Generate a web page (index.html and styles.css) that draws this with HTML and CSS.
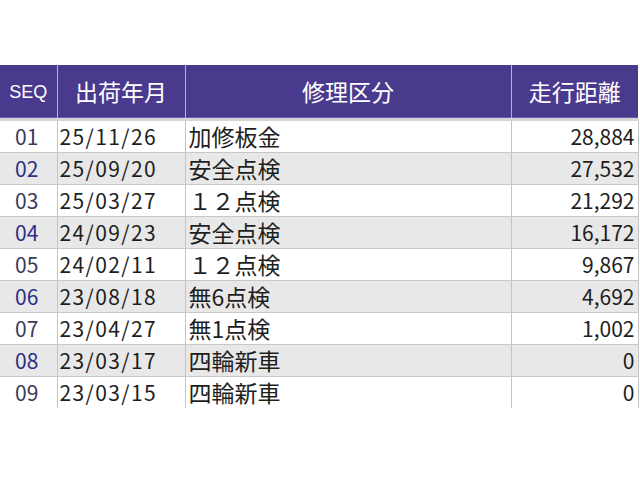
FILE: index.html
```html
<!DOCTYPE html>
<html lang="ja">
<head>
<meta charset="utf-8">
<link rel="stylesheet" href="styles.css">
</head>
<body>
<div class="page">
<table class="hist">
  <colgroup>
    <col class="c-seq"><col class="c-date"><col class="c-kind"><col class="c-km">
  </colgroup>
  <thead>
    <tr><th class="seq-h">SEQ</th><th>出荷年月</th><th>修理区分</th><th>走行距離</th></tr>
  </thead>
  <tbody>
    <tr><td class="seq">01</td><td class="date">25/11/26</td><td class="kind">加修板金</td><td class="km">28,884</td></tr>
    <tr class="alt"><td class="seq">02</td><td class="date">25/09/20</td><td class="kind">安全点検</td><td class="km">27,532</td></tr>
    <tr><td class="seq">03</td><td class="date">25/03/27</td><td class="kind">１２点検</td><td class="km">21,292</td></tr>
    <tr class="alt"><td class="seq">04</td><td class="date">24/09/23</td><td class="kind">安全点検</td><td class="km">16,172</td></tr>
    <tr><td class="seq">05</td><td class="date">24/02/11</td><td class="kind">１２点検</td><td class="km">9,867</td></tr>
    <tr class="alt"><td class="seq">06</td><td class="date">23/08/18</td><td class="kind">無6点検</td><td class="km">4,692</td></tr>
    <tr><td class="seq">07</td><td class="date">23/04/27</td><td class="kind">無1点検</td><td class="km">1,002</td></tr>
    <tr class="alt"><td class="seq">08</td><td class="date">23/03/17</td><td class="kind">四輪新車</td><td class="km">0</td></tr>
    <tr class="last"><td class="seq">09</td><td class="date">23/03/15</td><td class="kind">四輪新車</td><td class="km">0</td></tr>
  </tbody>
</table>
</div>
</body>
</html>
```

FILE: styles.css
```css
html, body {
  margin: 0;
  padding: 0;
  background: #ffffff;
}
.page {
  padding-top: 65px;
  width: 638px;
}
.hist {
  border-collapse: collapse;
  table-layout: fixed;
  width: 638px;
  font-family: "Noto Sans CJK JP", "Noto Sans", sans-serif;
  font-size: 21px;
  color: #1e1e1e;
}
.c-seq { width: 57px; }
.c-date { width: 128px; }
.c-kind { width: 326px; }
.c-km { width: 127px; }

.hist th {
  background: #4a3a8e;
  color: #ffffff;
  font-weight: normal;
  font-size: 23px;
  height: 53px;
  padding: 0;
  text-align: center;
  border-left: 1px solid #b8b0dc;
  border-bottom: 1px solid #3a2e72;
  box-shadow: inset 0 -1px 0 #6a5ca8;
  line-height: 1;
}
.hist th:first-child { border-left: none; }
.hist th.seq-h { font-size: 18px; font-family: "Liberation Sans", sans-serif; }
.hist thead tr { border-bottom: 3px solid #d6d6d6; }

.hist td {
  height: 31px;
  padding: 0;
  line-height: 1;
  border-left: 1px solid #c4c4c4;
  border-bottom: 1px solid #c8c8c8;
  white-space: nowrap;
  overflow: hidden;
}
.hist td:first-child { border-left: none; }
.hist td:last-child { border-right: 1px solid #c4c4c4; }
.hist tr.alt td { background: #e8e8e8; }
.hist tr.last td { border-bottom: none; }

.seq { text-align: center; color: #3a3a5c; padding-right: 3px !important; }
.hist tr.alt td.seq { color: #2e2e86; }
.date { padding-left: 2px !important; letter-spacing: 1.4px; }
.kind { padding-left: 3px !important; font-size: 23px; }
.km { text-align: right; padding-right: 3px !important; }
```
